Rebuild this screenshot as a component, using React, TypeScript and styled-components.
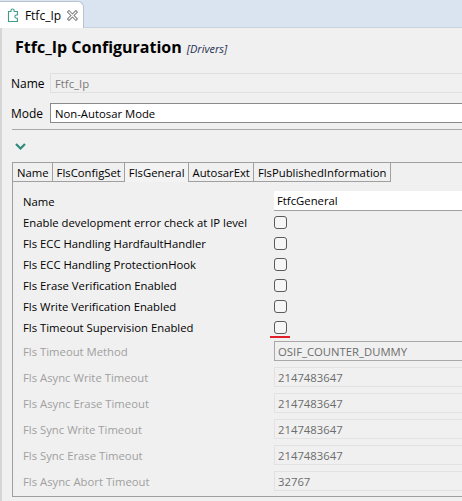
import React from "react";
import styled, { createGlobalStyle } from "styled-components";

const GlobalStyle = createGlobalStyle`
    html, body {
        margin: 0;
        padding: 0;
        overflow: hidden;
        background: #f0f0f0;
    }
    body {
        font-family: "Open Sans", "Noto Sans", "Liberation Sans", sans-serif;
        font-size: 11.3px;
        color: #000;
    }
`;

// outer window
const Page = styled.div`
    width: 480px;
    height: 501px;
    display: flex;
    flex-direction: column;
`;

// editor tab strip
const TabStrip = styled.div`
    height: 28px;
    background: #dae4f0;
    display: flex;
    align-items: flex-end;
    border-bottom: 1px solid #c9d3df;
    box-sizing: border-box;
`;

const EditorTab = styled.div`
    height: 27px;
    width: 84px;
    box-sizing: border-box;
    background: #fff;
    border: 1px solid #b9c3cf;
    border-left: none;
    border-bottom: none;
    border-top-right-radius: 6px;
    display: flex;
    align-items: center;
    padding-left: 7px;
    padding-right: 5px;
    gap: 6px;
    font-size: 12px;
    margin-bottom: -1px;
`;

const TabTitle = styled.span`
    flex: 1;
`;

const Editor = styled.div`
    flex: 1;
    border-left: 2px solid #d6d6d6;
    background: #f0f0f0;
    padding: 8px 0 0 9px;
    display: flex;
    flex-direction: column;
`;

const Heading = styled.div`
    display: flex;
    align-items: baseline;
    gap: 5px;
    padding-left: 4px;
    height: 24px;
`;

const HeadingTitle = styled.span`
    font-size: 16px;
    font-weight: 700;
`;

const HeadingTag = styled.span`
    font-size: 11px;
    font-style: italic;
    color: #1f2f4f;
`;

const TopRow = styled.div<{ $mt: number }>`
    display: grid;
    grid-template-columns: 39px 1fr;
    align-items: center;
    margin-top: ${p => p.$mt}px;
    height: 20px;
`;

const TopLabel = styled.span`
    font-size: 12px;
`;

const TextField = styled.div<{ $variant: "readonly" | "edit" }>`
    height: 20px;
    box-sizing: border-box;
    padding-left: 4px;
    display: flex;
    align-items: center;
    background: ${p => (p.$variant === "edit" ? "#fff" : "#f0f0f0")};
    border: 1px solid ${p => (p.$variant === "edit" ? "#8a8a8a" : "#e0e0e0")};
    color: ${p => (p.$variant === "edit" ? "#000" : "#7a7a7a")};
`;

const Separator = styled.div`
    height: 1px;
    background: #a8a8a8;
    margin: 6px 0 0 1px;
`;

const Toggle = styled.div`
    height: 32px;
    display: flex;
    align-items: center;
    padding-left: 4px;
`;

// tab folder
const Folder = styled.div`
    display: flex;
    flex-direction: column;
    flex: 1;
    margin-left: 1px;
    margin-bottom: 4px;
`;

const FolderTabs = styled.div`
    display: flex;
    height: 19px;
    border-top: 1px solid #a0a0a0;
    border-left: 1px solid #a0a0a0;
`;

const FolderTab = styled.div<{ $active?: boolean }>`
    padding: 0 3px 0 4px;
    border-right: 1px solid #a0a0a0;
    border-bottom: ${p => (p.$active ? "none" : "1px solid #a0a0a0")};
    background: ${p => (p.$active ? "#f3f3f3" : "#f0f0f0")};
    display: flex;
    align-items: center;
`;

const FolderBody = styled.div`
    flex: 1;
    border-left: 1px solid #a0a0a0;
    border-bottom: 1px solid #a0a0a0;
    padding: 9px 0 0 10px;
`;

const Form = styled.div`
    display: grid;
    grid-template-columns: 251px 1fr;
`;

const Label = styled.span<{ $disabled?: boolean; $h: number }>`
    height: ${p => p.$h}px;
    display: flex;
    align-items: center;
    color: ${p => (p.$disabled ? "#a0a0a0" : "#000")};
`;

const Cell = styled.div<{ $h: number }>`
    height: ${p => p.$h}px;
    display: flex;
    align-items: center;
    position: relative;
`;

const Gap = styled.div<{ $h: number }>`
    grid-column: 1 / -1;
    height: ${p => p.$h}px;
`;

const NameField = styled.div`
    height: 20px;
    flex: 1;
    box-sizing: border-box;
    background: #fff;
    border-bottom: 1px solid #a0a0a0;
    padding-left: 3px;
    display: flex;
    align-items: center;
`;

const Check = styled.div`
    width: 11px;
    height: 11px;
    border: 1px solid #5a5a5a;
    border-radius: 3px;
    background: #f6f6f6;
`;

const ErrorMark = styled.div`
    position: absolute;
    left: -4px;
    bottom: 0;
    width: 20px;
    height: 2px;
    background: #e3202a;
`;

const ValueField = styled.div<{ $combo?: boolean }>`
    height: 20px;
    flex: 1;
    box-sizing: border-box;
    background: #f0f0f0;
    border: 1px solid ${p => (p.$combo ? "#a8a8a8" : "#e2e2e2")};
    padding-left: 3px;
    display: flex;
    align-items: center;
    color: #6d6d6d;
`;

const PuzzleIcon = () => (
    <svg width="12" height="15" viewBox="0 0 12 15">
        <path
            d="M1.5 3.5 H4 V2.5 a1.6 1.6 0 0 1 3.2 0 V3.5 H10.5 V7 H9.5 a1.6 1.6 0 0 0 0 3.2 H10.5 V13.5 H1.5 Z"
            fill="#fff"
            stroke="#3f9a86"
            strokeWidth="1.1"
        />
    </svg>
);

const CloseIcon = () => (
    <svg width="11" height="11" viewBox="0 0 11 11">
        <path d="M2 2 L9 9 M9 2 L2 9" stroke="#7d7d7d" strokeWidth="3.2" strokeLinecap="square" />
        <path d="M2 2 L9 9 M9 2 L2 9" stroke="#fff" strokeWidth="1.2" strokeLinecap="square" />
    </svg>
);

const Chevron = () => (
    <svg width="11" height="7" viewBox="0 0 11 7">
        <path d="M1 1 L5.5 5.5 L10 1" fill="none" stroke="#2e8c7c" strokeWidth="2.2" />
    </svg>
);

const tabs = ["Name", "FlsConfigSet", "FlsGeneral", "AutosarExt", "FlsPublishedInformation"];

const checks = [
    "Enable development error check at IP level",
    "Fls ECC Handling HardfaultHandler",
    "Fls ECC Handling ProtectionHook",
    "Fls Erase Verification Enabled",
    "Fls Write Verification Enabled",
    "Fls Timeout Supervision Enabled",
];

const disabledRows: { label: string; value: string; combo?: boolean }[] = [
    { label: "Fls Timeout Method", value: "OSIF_COUNTER_DUMMY", combo: true },
    { label: "Fls Async Write Timeout", value: "2147483647" },
    { label: "Fls Async Erase Timeout", value: "2147483647" },
    { label: "Fls Sync Write Timeout", value: "2147483647" },
    { label: "Fls Sync Erase Timeout", value: "2147483647" },
    { label: "Fls Async Abort Timeout", value: "32767" },
];

const App = () => {
    return (
        <Page>
            <GlobalStyle />
            <TabStrip>
                <EditorTab>
                    <PuzzleIcon />
                    <TabTitle>Ftfc_Ip</TabTitle>
                    <CloseIcon />
                </EditorTab>
            </TabStrip>
            <Editor>
                <Heading>
                    <HeadingTitle>Ftfc_Ip Configuration</HeadingTitle>
                    <HeadingTag>[Drivers]</HeadingTag>
                </Heading>
                <TopRow $mt={13}>
                    <TopLabel>Name</TopLabel>
                    <TextField $variant="readonly">Ftfc_Ip</TextField>
                </TopRow>
                <TopRow $mt={10}>
                    <TopLabel>Mode</TopLabel>
                    <TextField $variant="edit">Non-Autosar Mode</TextField>
                </TopRow>
                <Separator />
                <Toggle>
                    <Chevron />
                </Toggle>
                <Folder>
                    <FolderTabs>
                        {tabs.map(t => (
                            <FolderTab key={t} $active={t === "FlsGeneral"}>{t}</FolderTab>
                        ))}
                    </FolderTabs>
                    <FolderBody>
                        <Form>
                            <Label $h={20}>Name</Label>
                            <Cell $h={20}>
                                <NameField>FtfcGeneral</NameField>
                            </Cell>
                            <Gap $h={1} />
                            {checks.map((c, i) => (
                                <React.Fragment key={c}>
                                    <Label $h={21}>{c}</Label>
                                    <Cell $h={21}>
                                        <Check />
                                        {i === checks.length - 1 && <ErrorMark />}
                                    </Cell>
                                </React.Fragment>
                            ))}
                            {disabledRows.map(r => (
                                <React.Fragment key={r.label}>
                                    <Label $h={26} $disabled>{r.label}</Label>
                                    <Cell $h={26}>
                                        <ValueField $combo={r.combo}>{r.value}</ValueField>
                                    </Cell>
                                </React.Fragment>
                            ))}
                        </Form>
                    </FolderBody>
                </Folder>
            </Editor>
        </Page>
    );
};

export default App;
